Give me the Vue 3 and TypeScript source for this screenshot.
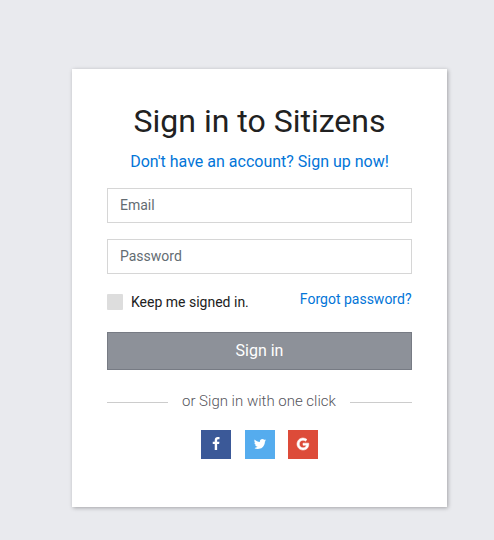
<script setup lang="ts">
import { ref } from 'vue'

interface Social {
  name: string
  path: string
}

const email = ref('')
const password = ref('')
const remember = ref(false)

const socials: Social[] = [
  {
    name: 'facebook',
    path: 'M1343 12v264h-157q-86 0-116 36t-30 108v189h293l-39 296h-254v759H734V905H479V609h255V391q0-186 104-288.500T1115 0q147 0 228 12z',
  },
  {
    name: 'twitter',
    path: 'M1684 408q-67 98-162 167 1 14 1 42 0 130-38 259.500T1369.500 1125 1185 1335.500t-258 146-323 54.500q-271 0-496-145 35 4 78 4 225 0 401-138-105-2-188-64.500T285 1033q33 5 61 5 43 0 85-11-112-23-185.500-111.500T172 710v-4q68 38 146 41-66-44-105-115t-39-154q0-88 44-163 121 149 294.500 238.500T884 653q-8-38-8-74 0-134 94.500-228.500T1199 256q140 0 236 102 109-21 205-78-37 115-142 178 93-10 186-50z',
  },
  {
    name: 'google',
    path: 'M896 786h725q12 67 12 128 0 217-91 387.500T1282.500 1568 896 1664q-157 0-299-60.500T352 1440 188.500 1195 128 896t60.500-299T352 352t245-163.500T896 128q300 0 515 201l-209 201Q1079 411 896 411q-129 0-238.500 65T484 652.500 420 896t64 243.500T657.500 1316 896 1381q87 0 160-24t120-60 82-82 51.500-87 22.500-78H896V786z',
  },
]
</script>

<template>
  <main class="page">
    <form class="card" @submit.prevent>
      <h1 class="title">Sign in to Sitizens</h1>
      <a class="signup" href="#">Don't have an account? Sign up now!</a>
      <input v-model="email" class="field" type="text" placeholder="Email" />
      <input v-model="password" class="field" type="password" placeholder="Password" />
      <div class="options">
        <label class="remember">
          <input v-model="remember" class="check" type="checkbox" />
          <span>Keep me signed in.</span>
        </label>
        <a class="forgot" href="#">Forgot password?</a>
      </div>
      <button class="submit" type="submit">Sign in</button>
      <div class="divider"><span>or Sign in with one click</span></div>
      <div class="socials">
        <a v-for="s in socials" :key="s.name" href="#" class="social" :class="s.name">
          <svg class="icon" viewBox="0 0 1792 1792" width="14" height="14"><path :d="s.path" /></svg>
        </a>
      </div>
    </form>
  </main>
</template>

<style>
body {
  background: #e9eaee;
}
</style>

<style scoped>
.page {
  box-sizing: border-box;
  height: 540px;
  padding: 69px 47px 0 72px;
  overflow: hidden;
  background: #e9eaee;
  font-family: Roboto, "Liberation Sans", sans-serif;
  color: #212121;
}
.card {
  box-sizing: border-box;
  display: flex;
  flex-direction: column;
  width: 375px;
  height: 438px;
  padding: 32px 35px 0;
  background: #fff;
  box-shadow: 1px 1px 4px rgba(0, 0, 0, 0.3);
}
a {
  color: #0275d8;
  text-decoration: none;
}
.title {
  margin: 0;
  font-size: 32px;
  line-height: 40px;
  font-weight: 400;
  text-align: center;
}
.signup {
  margin: 9px 0 14px;
  font-size: 16px;
  line-height: 24px;
  text-align: center;
}
.field {
  box-sizing: border-box;
  width: 100%;
  height: 35px;
  margin: 0 0 16px;
  padding: 0 12px 2px;
  border: 1px solid #d6d6d6;
  border-radius: 0;
  background: #fff;
  font: 400 14px/20px Roboto, sans-serif;
  outline: none;
}
.field::placeholder {
  color: #636c72;
  opacity: 1;
}
.options {
  display: flex;
  justify-content: space-between;
  height: 42px;
  font-size: 14px;
}
.remember {
  display: flex;
  align-items: center;
  gap: 8px;
  height: 24px;
}
.check {
  appearance: none;
  width: 16px;
  height: 16px;
  margin: 0;
  border-radius: 1px;
  background: #ddd;
}
.forgot {
  margin-right: 0.5px;
  line-height: 19px;
}
.submit {
  height: 38px;
  padding: 0;
  border: 1px solid #777b84;
  border-radius: 0;
  background: #8d9199;
  color: #fff;
  font: 400 16px/24px Roboto, sans-serif;
}
.divider {
  display: flex;
  align-items: center;
  gap: 14px;
  height: 22px;
  margin-top: 20px;
  color: #55555c;
  font-size: 15px;
  font-weight: 300;
  white-space: nowrap;
}
.divider::before,
.divider::after {
  content: "";
  flex: 1;
  height: 1px;
  margin-top: 2px;
  background: #ccc;
}
.divider::before {
  flex: 0 0 61px;
}
.socials {
  display: flex;
  justify-content: center;
  gap: 13px;
  margin-top: 18px;
}
.social {
  box-sizing: border-box;
  display: flex;
  align-items: center;
  justify-content: center;
  width: 30px;
  height: 29px;
  padding-bottom: 1px;
}
.icon {
  fill: #fff;
}
.facebook {
  margin-right: 1px;
  background: #3b5998;
}
.twitter {
  background: #55acee;
}
.google {
  background: #dd4b39;
}
.google .icon {
  stroke: #fff;
  stroke-width: 70;
}
</style>
